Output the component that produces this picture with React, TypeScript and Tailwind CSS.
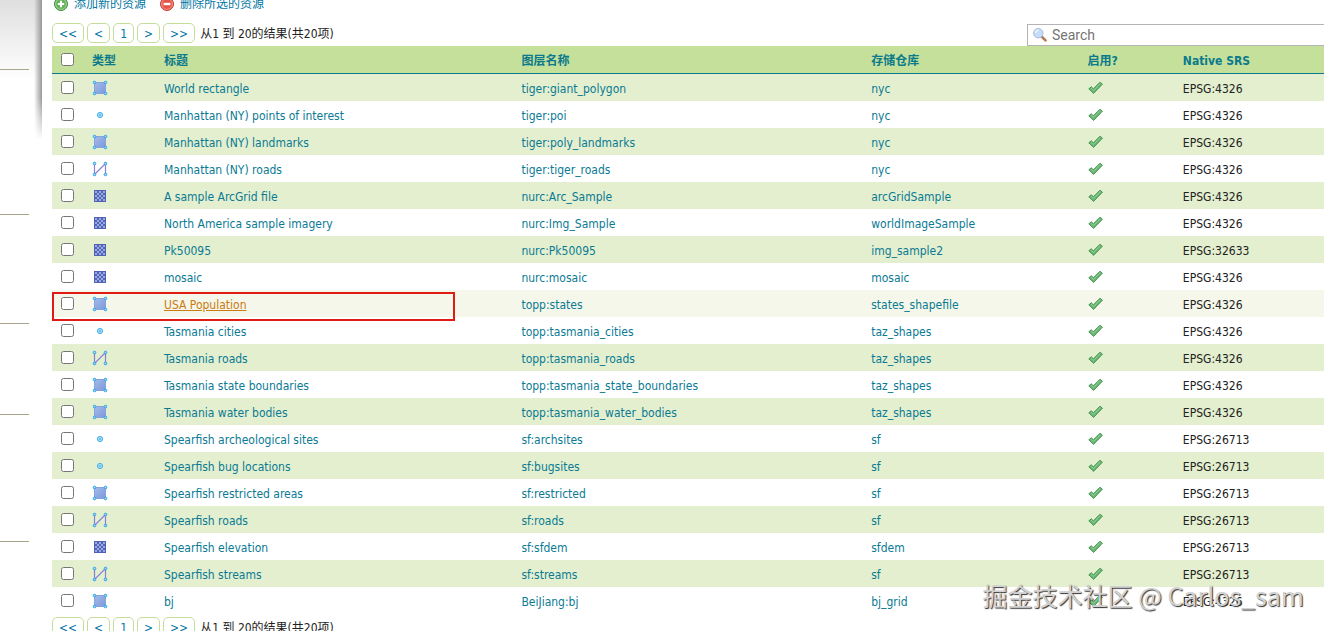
import { useState } from "react";

type LayerType = "polygon" | "point" | "line" | "raster";

interface Layer {
  type: LayerType;
  title: string;
  name: string;
  store: string;
  srs: string;
}

const layers: Layer[] = [
  { type: "polygon", title: "World rectangle", name: "tiger:giant_polygon", store: "nyc", srs: "EPSG:4326" },
  { type: "point", title: "Manhattan (NY) points of interest", name: "tiger:poi", store: "nyc", srs: "EPSG:4326" },
  { type: "polygon", title: "Manhattan (NY) landmarks", name: "tiger:poly_landmarks", store: "nyc", srs: "EPSG:4326" },
  { type: "line", title: "Manhattan (NY) roads", name: "tiger:tiger_roads", store: "nyc", srs: "EPSG:4326" },
  { type: "raster", title: "A sample ArcGrid file", name: "nurc:Arc_Sample", store: "arcGridSample", srs: "EPSG:4326" },
  { type: "raster", title: "North America sample imagery", name: "nurc:Img_Sample", store: "worldImageSample", srs: "EPSG:4326" },
  { type: "raster", title: "Pk50095", name: "nurc:Pk50095", store: "img_sample2", srs: "EPSG:32633" },
  { type: "raster", title: "mosaic", name: "nurc:mosaic", store: "mosaic", srs: "EPSG:4326" },
  { type: "polygon", title: "USA Population", name: "topp:states", store: "states_shapefile", srs: "EPSG:4326" },
  { type: "point", title: "Tasmania cities", name: "topp:tasmania_cities", store: "taz_shapes", srs: "EPSG:4326" },
  { type: "line", title: "Tasmania roads", name: "topp:tasmania_roads", store: "taz_shapes", srs: "EPSG:4326" },
  { type: "polygon", title: "Tasmania state boundaries", name: "topp:tasmania_state_boundaries", store: "taz_shapes", srs: "EPSG:4326" },
  { type: "polygon", title: "Tasmania water bodies", name: "topp:tasmania_water_bodies", store: "taz_shapes", srs: "EPSG:4326" },
  { type: "point", title: "Spearfish archeological sites", name: "sf:archsites", store: "sf", srs: "EPSG:26713" },
  { type: "point", title: "Spearfish bug locations", name: "sf:bugsites", store: "sf", srs: "EPSG:26713" },
  { type: "polygon", title: "Spearfish restricted areas", name: "sf:restricted", store: "sf", srs: "EPSG:26713" },
  { type: "line", title: "Spearfish roads", name: "sf:roads", store: "sf", srs: "EPSG:26713" },
  { type: "raster", title: "Spearfish elevation", name: "sf:sfdem", store: "sfdem", srs: "EPSG:26713" },
  { type: "line", title: "Spearfish streams", name: "sf:streams", store: "sf", srs: "EPSG:26713" },
  { type: "polygon", title: "bj", name: "BeiJiang:bj", store: "bj_grid", srs: "EPSG:4326" },
];

const columns = ["类型", "标题", "图层名称", "存储仓库", "启用?", "Native SRS"];

const highlighted = "USA Population";

function Node({ x, y }: { x: number; y: number }) {
  return <circle cx={x} cy={y} r="1.3" fill="#9fe0fb" stroke="#2d9fe0" strokeWidth="1" />;
}

function TypeIcon({ type }: { type: LayerType }) {
  return (
    <svg width="16" height="16" viewBox="0 0 16 16" role="img" aria-label={type} className="block">
      {type === "polygon" && (
        <>
          <defs>
            <linearGradient id="poly" x1="0" y1="0" x2="1" y2="1">
              <stop offset="0" stopColor="#a3bcec" />
              <stop offset="1" stopColor="#7c98d8" />
            </linearGradient>
          </defs>
          <rect x="2.5" y="2.5" width="11" height="11" fill="url(#poly)" stroke="#86a3e0" />
          <Node x={2.5} y={2.5} />
          <Node x={13.5} y={2.5} />
          <Node x={2.5} y={13.5} />
          <Node x={13.5} y={13.5} />
        </>
      )}
      {type === "point" && (
        <>
          <circle cx="8" cy="8" r="2.6" fill="#a9e1fa" stroke="#45aee8" />
          <circle cx="8" cy="8" r="1" fill="#5db4e6" />
        </>
      )}
      {type === "line" && (
        <>
          <path d="M2.5 2.5V13.5L13.5 2.5V13.5" fill="none" stroke="#8582d6" strokeWidth="1.2" />
          <Node x={2.5} y={2.5} />
          <Node x={13.5} y={2.5} />
          <Node x={2.5} y={13.5} />
          <Node x={13.5} y={13.5} />
        </>
      )}
      {type === "raster" && (
        <>
          <defs>
            <pattern id="check" x="3" y="3" width="4" height="4" patternUnits="userSpaceOnUse">
              <rect width="4" height="4" fill="#5464b8" />
              <rect width="2" height="2" fill="#98abe0" />
              <rect x="2" y="2" width="2" height="2" fill="#98abe0" />
            </pattern>
          </defs>
          <rect x="2" y="2" width="12" height="12" fill="#5060b2" />
          <rect x="3" y="3" width="10" height="10" fill="url(#check)" />
        </>
      )}
    </svg>
  );
}

function TickIcon() {
  return (
    <svg width="16" height="16" viewBox="0 0 16 16" role="img" aria-label="enabled" className="block">
      <path
        d="M1.8 8.8L4.2 6.8L6.4 8.8L13 2.2L15.4 4.2L6.6 13.4Z"
        fill="#6ab873"
        stroke="#4a9656"
        strokeWidth="1"
        strokeLinejoin="round"
      />
      <path d="M4 8.2L6.5 10.4L13.3 3.6" fill="none" stroke="#8fd094" strokeWidth="1" />
    </svg>
  );
}

function AddIcon() {
  return (
    <svg width="16" height="16" viewBox="0 0 16 16" aria-hidden="true">
      <circle cx="9" cy="8" r="6.5" fill="#66b35c" stroke="#3f8a3c" />
      <circle cx="9" cy="8" r="5.4" fill="none" stroke="#9fd495" strokeWidth="1" />
      <path d="M9 4.8V11.2M5.8 8H12.2" stroke="#fff" strokeWidth="2" />
    </svg>
  );
}

function RemoveIcon() {
  return (
    <svg width="16" height="16" viewBox="0 0 16 16" aria-hidden="true">
      <circle cx="9" cy="8" r="6.5" fill="#e5564a" stroke="#c9392f" />
      <circle cx="9" cy="8" r="5.4" fill="none" stroke="#f09a8c" strokeWidth="1" />
      <path d="M5.6 8H12.4" stroke="#fff" strokeWidth="2.4" />
    </svg>
  );
}

function SearchIcon() {
  return (
    <svg width="16" height="16" viewBox="0 0 16 16" aria-hidden="true" className="shrink-0">
      <path d="M10 10L13.6 13.4" stroke="#b9794f" strokeWidth="2.6" strokeLinecap="round" />
      <path d="M9.2 9.2L10.8 10.8" stroke="#8795a8" strokeWidth="1.6" />
      <circle cx="6.3" cy="6.2" r="4.7" fill="#c5dcf8" stroke="#a3b9da" />
      <path d="M3.6 5.8A3 3 0 0 1 6.6 3.2" fill="none" stroke="#eef6ff" strokeWidth="1.4" />
    </svg>
  );
}

function Pager() {
  return (
    <nav className="flex items-center gap-[3px]">
      {["<<", "<", "1", ">", ">>"].map((label) => (
        <button
          key={label}
          type="button"
          className="h-5 rounded-[5px] border border-[#c5dd99] bg-white px-1.5 pt-0.5 leading-4 text-[#0076a1]"
        >
          {label}
        </button>
      ))}
      <span className="pt-0.5 pl-0.5 text-[#222]">从1 到 20的结果(共20项)</span>
    </nav>
  );
}

function Checkbox({ label, checked, onChange }: { label: string; checked: boolean; onChange: () => void }) {
  return (
    <input
      type="checkbox"
      aria-label={label}
      checked={checked}
      onChange={onChange}
      className="ml-[9px] block size-[13px]"
    />
  );
}

export default function App() {
  const [selected, setSelected] = useState<string[]>([]);
  const [search, setSearch] = useState("");

  const toggle = (name: string) => {
    setSelected(selected.includes(name) ? selected.filter((n) => n !== name) : [...selected, name]);
  };

  const toggleAll = () => {
    setSelected(selected.length === layers.length ? [] : layers.map((l) => l.name));
  };

  const visible = layers.filter((l) => l.title.toLowerCase().includes(search.toLowerCase()));

  return (
    <div className="relative flex h-screen overflow-hidden bg-white font-['DejaVu_Sans_Condensed','Noto_Sans_CJK_SC',sans-serif] text-xs text-[#222]">
      {/* Sidebar edge */}
      <aside className="flex w-[42px] shrink-0 bg-linear-to-b from-[#dfdfdf] to-white to-[80px]">
        <div className="flex-1">
          <div className="h-[70px] w-[29px] border-b border-[#a9a58c]" />
          <div className="h-[145px] w-[29px] border-b border-[#a9a58c]" />
          <div className="h-[109px] w-[29px] border-b border-[#a9a58c]" />
          <div className="h-[91px] w-[29px] border-b border-[#a9a58c]" />
          <div className="h-[127px] w-[29px] border-b border-[#a9a58c]" />
        </div>
        <div className="h-[140px] w-2 bg-linear-to-r from-transparent to-[#969696] mask-b-from-70%" />
      </aside>

      {/* Layers */}
      <main className="-mt-[6px] min-w-0 flex-1 pl-[10px]">
        <div className="flex h-[29px] items-start gap-3">
          <a href="#add" className="flex h-5 items-center gap-1.5 text-[#0076a1]">
            <AddIcon />
            添加新的资源
          </a>
          <a href="#remove" className="flex h-5 items-center gap-1.5 text-[#0076a1]">
            <RemoveIcon />
            删除所选的资源
          </a>
        </div>

        <div className="flex h-[23px] items-end justify-between">
          <div className="self-start">
            <Pager />
          </div>
          <label className="flex h-[22px] w-[297px] items-center gap-1 border border-r-0 border-[#b4b4b4] bg-white pl-1">
            <SearchIcon />
            <input
              type="text"
              aria-label="Search"
              placeholder="Search"
              value={search}
              onChange={(e) => setSearch(e.target.value)}
              className="w-full font-[Roboto,sans-serif] text-sm leading-5 outline-none placeholder:text-[#757575]"
            />
          </label>
        </div>

        <table className="w-full table-fixed border-separate border-spacing-0 text-left">
          <colgroup>
            <col className="w-10" />
            <col className="w-[72px]" />
            <col className="w-[28.1%]" />
            <col className="w-[27.5%]" />
            <col className="w-[17%]" />
            <col className="w-[7.5%]" />
            <col />
          </colgroup>
          <thead>
            <tr className="h-7 bg-[#c5e09a] text-[#0a7a8c]">
              <th className="border-b border-b-[#0a7a8c] p-0">
                <Checkbox label="全选" checked={selected.length === layers.length} onChange={toggleAll} />
              </th>
              {columns.map((column) => (
                <th key={column} className="border-b border-b-[#0a7a8c] p-0 pt-0.5">
                  {column}
                </th>
              ))}
            </tr>
          </thead>
          <tbody>
            {visible.map((layer) => {
              const active = layer.title === highlighted;
              return (
                <tr key={layer.name} className={active ? "h-[27px] bg-[#f4f7e9]" : "h-[27px] odd:bg-[#e3efcf]"}>
                  <td className="relative p-0">
                    <Checkbox
                      label={layer.title}
                      checked={selected.includes(layer.name)}
                      onChange={() => toggle(layer.name)}
                    />
                    {active && (
                      <span className="pointer-events-none absolute top-[2px] left-0 z-10 h-[29px] w-[403px] border-2 border-[#e01a14]" />
                    )}
                  </td>
                  <td className="p-0">
                    <TypeIcon type={layer.type} />
                  </td>
                  <td className="p-0 pt-0.5">
                    <a href="#layer" className={active ? "text-[#cc7a12] underline" : "text-[#0a7a94]"}>
                      {layer.title}
                    </a>
                  </td>
                  <td className="p-0 pt-0.5 text-[#0a7a94]">{layer.name}</td>
                  <td className="p-0 pt-0.5">
                    <a href="#store" className="text-[#0a7a94]">
                      {layer.store}
                    </a>
                  </td>
                  <td className="p-0">
                    <TickIcon />
                  </td>
                  <td className="p-0 pt-0.5">{layer.srs}</td>
                </tr>
              );
            })}
          </tbody>
        </table>

        <div className="pt-[3px]">
          <Pager />
        </div>
      </main>

      {/* Watermark */}
      <p className="pointer-events-none absolute right-5 bottom-[18px] text-[25px] leading-9 whitespace-nowrap text-[#d2d2d2] [text-shadow:1px_1px_1px_#333] font-['Noto_Sans_CJK_SC',sans-serif]">
        掘金技术社区 @ Carlos_sam
      </p>
    </div>
  );
}
